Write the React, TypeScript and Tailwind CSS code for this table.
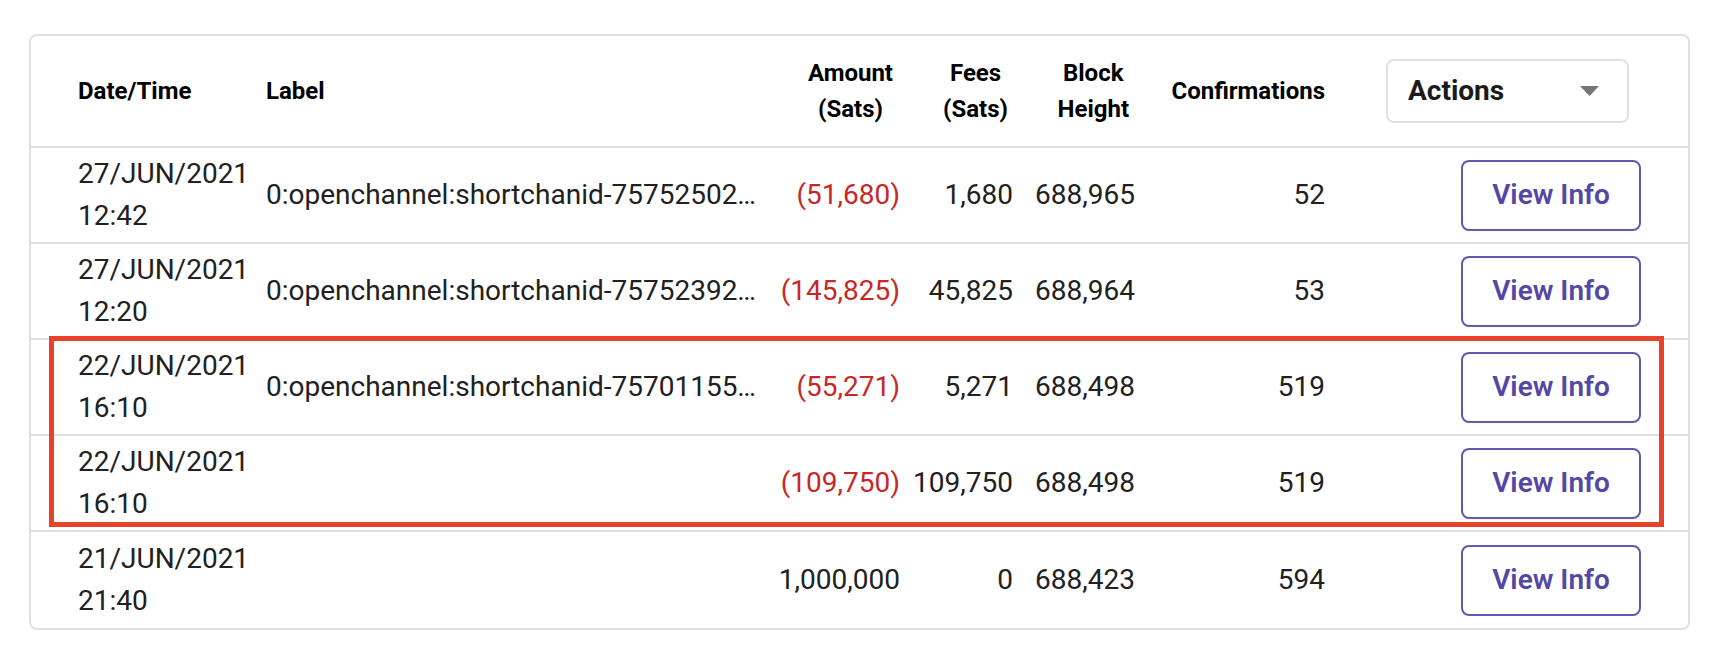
import React from "react";

type Row = {
  date: string;
  time: string;
  label: string;
  amount: string;
  negative: boolean;
  fees: string;
  block: string;
  conf: string;
};

const rows: Row[] = [
  { date: "27/JUN/2021", time: "12:42", label: "0:openchannel:shortchanid-75752502…", amount: "(51,680)", negative: true, fees: "1,680", block: "688,965", conf: "52" },
  { date: "27/JUN/2021", time: "12:20", label: "0:openchannel:shortchanid-75752392…", amount: "(145,825)", negative: true, fees: "45,825", block: "688,964", conf: "53" },
  { date: "22/JUN/2021", time: "16:10", label: "0:openchannel:shortchanid-75701155…", amount: "(55,271)", negative: true, fees: "5,271", block: "688,498", conf: "519" },
  { date: "22/JUN/2021", time: "16:10", label: "", amount: "(109,750)", negative: true, fees: "109,750", block: "688,498", conf: "519" },
  { date: "21/JUN/2021", time: "21:40", label: "", amount: "1,000,000", negative: false, fees: "0", block: "688,423", conf: "594" },
];

export default function App() {
  return (
    <div
      className="w-[1716px] h-[648px] bg-white pl-[29px] pt-[34px]"
      style={{ fontFamily: "Roboto, 'Noto Sans', sans-serif" }}
    >
      <div className="relative w-[1661px] rounded-[8px] border-2 border-[#e0e0e0] bg-white">
        {/* Header */}
        <div className="flex h-[112px] items-center border-b-2 border-[#e0e0e0] pl-[47px] text-[24px] font-bold leading-[36px] text-black">
          <div className="w-[188px]">Date/Time</div>
          <div className="w-[500px]">Label</div>
          <div className="flex w-[134px] justify-end pr-[7px]">
            <div className="text-center">Amount<br />(Sats)</div>
          </div>
          <div className="flex w-[113px] justify-end pr-[5px]">
            <div className="text-center">Fees<br />(Sats)</div>
          </div>
          <div className="flex w-[122px] justify-end pr-[6px]">
            <div className="text-center">Block<br />Height</div>
          </div>
          <div className="w-[190px] text-right">Confirmations</div>
          <div className="flex flex-1 justify-end pr-[59px]">
            <div className="flex h-[64px] w-[243px] items-center justify-between rounded-[8px] border-2 border-[#e0e0e0] pl-[20px] pr-[28px]">
              <span className="text-[28px] font-bold text-[#1a1a1a]">Actions</span>
              <svg width="19" height="10" viewBox="0 0 19 10">
                <path d="M0 0 L19 0 L9.5 10 Z" fill="#757575" />
              </svg>
            </div>
          </div>
        </div>

        {/* Rows */}
        {rows.map((r, i) => (
          <div
            key={i}
            className={
              "flex h-[96px] items-center pl-[47px] text-[28px] leading-[42px] text-[#212121] " +
              (i < rows.length - 1 ? "border-b-2 border-[#e0e0e0]" : "")
            }
          >
            <div className="w-[188px]">
              <div>{r.date}</div>
              <div>{r.time}</div>
            </div>
            <div className="w-[500px] whitespace-nowrap overflow-hidden">{r.label}</div>
            <div className={"w-[134px] whitespace-nowrap text-right " + (r.negative ? "text-[#c62828]" : "")}>
              {r.amount}
            </div>
            <div className="w-[113px] whitespace-nowrap text-right">{r.fees}</div>
            <div className="w-[122px] whitespace-nowrap text-right">{r.block}</div>
            <div className="w-[190px] text-right">{r.conf}</div>
            <div className="flex flex-1 justify-end pr-[47px]">
              <button className="flex h-[71px] w-[180px] items-center justify-center rounded-[8px] border-2 border-[#6457b0] text-[28px] font-semibold text-[#5547a3]">
                View Info
              </button>
            </div>
          </div>
        ))}

        {/* Highlight annotation */}
        <div className="pointer-events-none absolute left-[18px] top-[300px] h-[191px] w-[1615px] border-[5px] border-[#e8432a]" />
      </div>
    </div>
  );
}
